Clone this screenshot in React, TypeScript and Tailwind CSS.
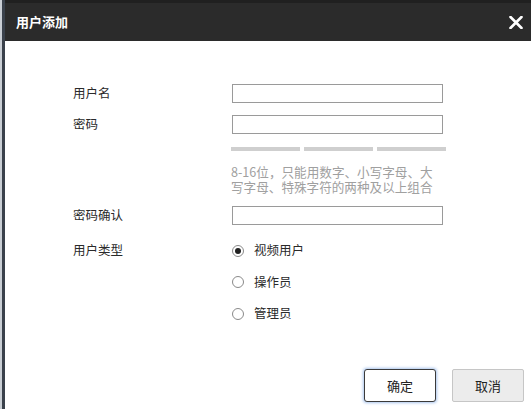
import React from "react";

const font = { fontFamily: '"Noto Sans CJK SC", "Noto Sans", sans-serif' };

function Radio({ checked, label }: { checked?: boolean; label: string }) {
  return (
    <div className="flex h-[19px] items-center">
      <span className="flex h-[12px] w-[12px] items-center justify-center rounded-full border border-[#8a8a8a] bg-white">
        {checked && <span className="h-[6px] w-[6px] rounded-full bg-[#222]" />}
      </span>
      <span className="ml-[10px] text-[12.5px] leading-none text-[#2a2a2a]">{label}</span>
    </div>
  );
}

function Input() {
  return <div className="h-[19px] w-[211px] border border-[#9a9a9a] bg-white" />;
}

export default function App() {
  return (
    <div className="flex h-[409px] w-[531px] overflow-hidden bg-white" style={font}>
      <div className="flex w-[5px] shrink-0">
        <div className="w-[2px] bg-[#c9ced4]" />
        <div className="w-[3px] bg-[#3a414b]" />
      </div>
      <div className="flex flex-1 flex-col">
        <div className="h-[3px] bg-[#202020]" />
        <div className="flex h-[38px] items-center justify-between bg-[#2b2b2b] pl-[11px] pr-[8px]">
          <span className="text-[13px] font-bold text-white">用户添加</span>
          <svg width="14" height="13" viewBox="0 0 14 13">
            <path d="M1.5 1 L12.5 12 M12.5 1 L1.5 12" stroke="white" strokeWidth="2.6" strokeLinecap="round" />
          </svg>
        </div>
        <div className="flex flex-1 flex-col pl-[68px]">
          <div className="mt-[43px] flex h-[19px] items-center">
            <span className="w-[159px] text-[12.5px] text-[#2a2a2a]">用户名</span>
            <Input />
          </div>
          <div className="mt-[12px] flex h-[19px] items-center">
            <span className="w-[159px] text-[12.5px] text-[#2a2a2a]">密码</span>
            <Input />
          </div>
          <div className="ml-[158px] mt-[13px] grid w-[215px] grid-cols-3 gap-[4px]">
            <div className="h-[4px] bg-[#cfcfcf]" />
            <div className="h-[4px] bg-[#cfcfcf]" />
            <div className="h-[4px] bg-[#cfcfcf]" />
          </div>
          <div className="ml-[158px] mt-[13px] flex flex-col text-[12.6px] leading-[15px] text-[#a0a0a0]">
            <span className="h-[15px]">8-16位，只能用数字、小写字母、大</span>
            <span className="h-[15px]">写字母、特殊字符的两种及以上组合</span>
          </div>
          <div className="mt-[12px] flex h-[19px] items-center">
            <span className="w-[159px] text-[12.5px] text-[#2a2a2a]">密码确认</span>
            <Input />
          </div>
          <div className="mt-[16px] flex">
            <span className="flex h-[19px] w-[159px] items-center text-[12.5px] text-[#2a2a2a]">用户类型</span>
            <div className="flex flex-col gap-[12.5px]">
              <Radio checked label="视频用户" />
              <Radio label="操作员" />
              <Radio label="管理员" />
            </div>
          </div>
          <div className="mt-auto mb-[7px] mr-[7px] flex justify-end gap-[16px]">
            <button className="flex h-[33px] w-[72px] items-center justify-center rounded-[3px] border border-[#3a3a3a] bg-white text-[13px] text-[#222] shadow-[0_0_3px_1px_#a9c4ec]">
              确定
            </button>
            <button className="flex h-[33px] w-[72px] items-center justify-center rounded-[2px] border border-[#c6c6c6] bg-[#ececec] text-[13px] text-[#222]">
              取消
            </button>
          </div>
        </div>
      </div>
    </div>
  );
}
